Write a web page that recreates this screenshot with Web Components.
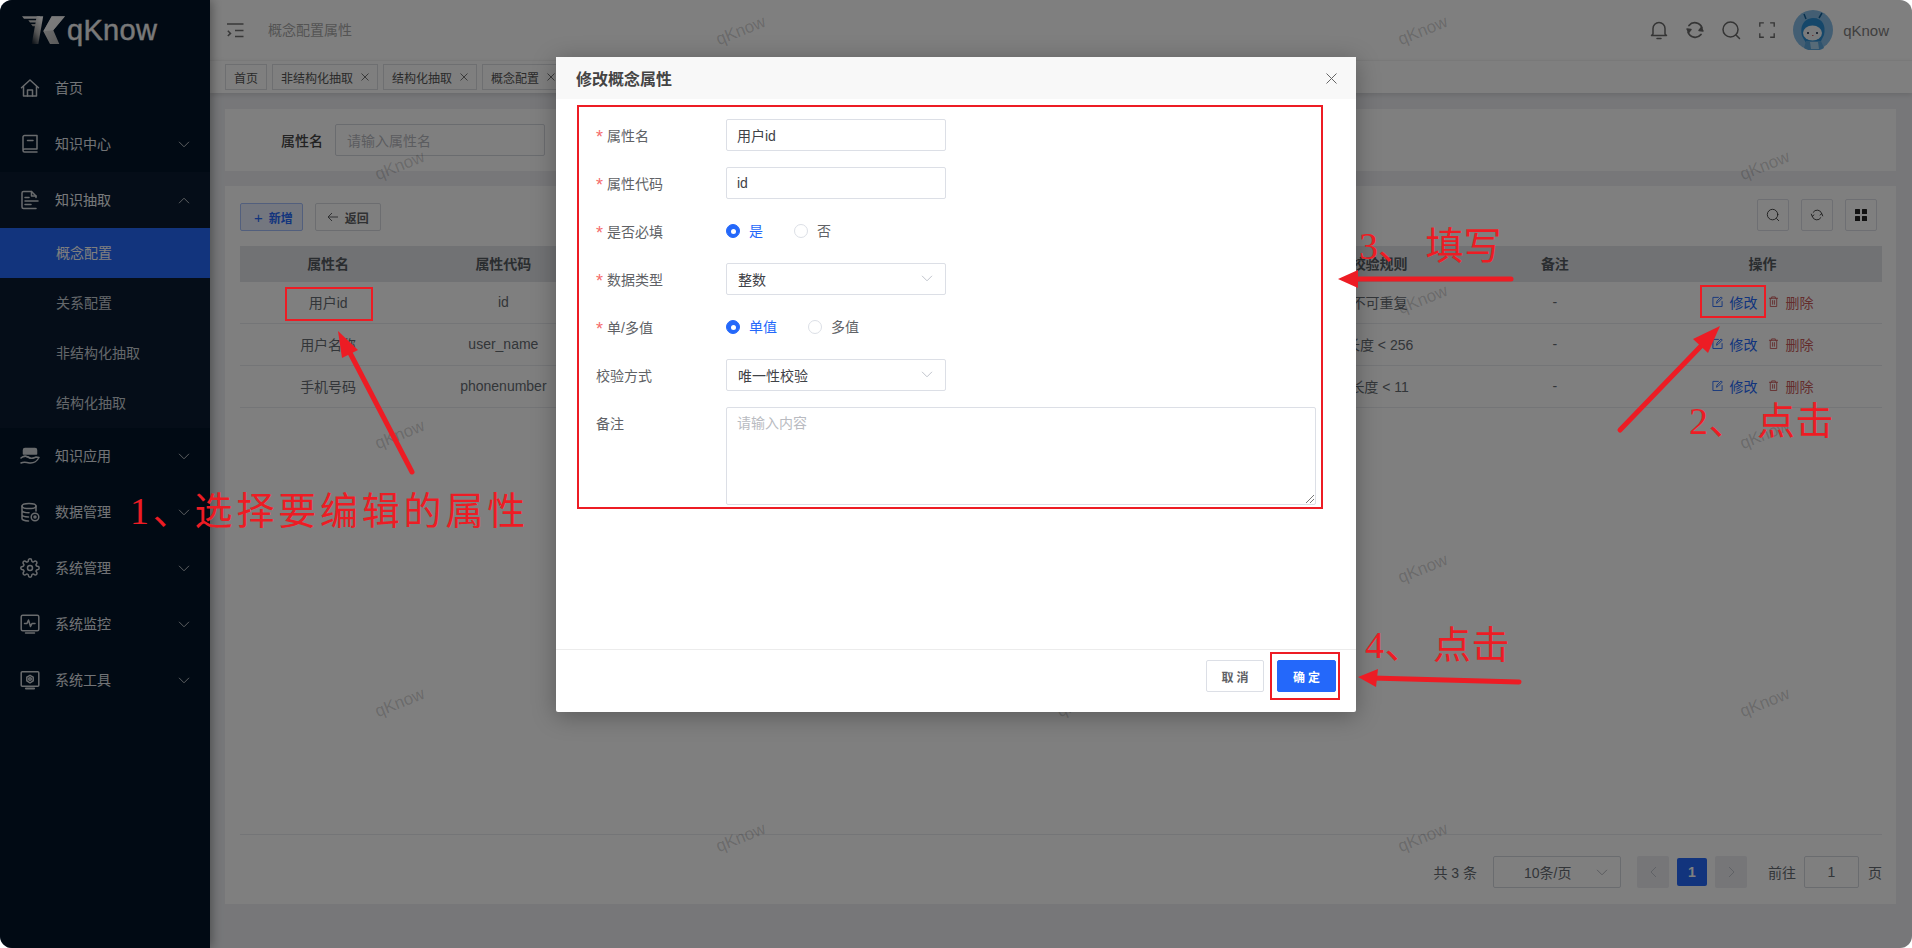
<!DOCTYPE html>
<html lang="zh"><head><meta charset="utf-8"><title>qKnow</title>
<style>
html,body{margin:0;padding:0;width:1912px;height:948px;overflow:hidden;background:#fff;font-family:"Liberation Sans","Noto Sans CJK SC",sans-serif;font-size:14px}
</style></head><body>
<x-app></x-app>
<script>
const FONT='"Liberation Sans","Noto Sans CJK SC",sans-serif';
const PRIMARY='#2468fa';
function def(name,css,html,init){
  customElements.define(name,class extends HTMLElement{
    connectedCallback(){
      if(this.shadowRoot)return;
      const r=this.attachShadow({mode:'open'});
      const h=typeof html==='function'?html(this):html;
      r.innerHTML='<style>'+css+'</style>'+h;
      if(init)init(r,this);
    }
  });
}
const chev=(d,c,w=12)=>`<svg width="${w}" height="${Math.round(w*.6)}" viewBox="0 0 12 7" fill="none" stroke="${c}" stroke-width="1"><path d="${d==='up'?'M1 6.2L6 1.2l5 5':'M1 .8l5 5 5-5'}"/></svg>`;
const ic=(inner,s=20,vb=20,sw=1.5)=>`<svg width="${s}" height="${s}" viewBox="0 0 ${vb} ${vb}" fill="none" stroke="currentColor" stroke-width="${sw}" stroke-linejoin="round" stroke-linecap="round">${inner}</svg>`;
const ICONS={
 home:ic('<path d="M1.500 9.800L10 2l8.500 7.800"/><path d="M3.500 8.500V18h13V8.500"/><path d="M7.500 18v-6h5v6"/>'),
 book:ic('<path d="M3 16.500V3a1.500 1.500 0 0 1 1.500-1.500H17V15H4.500A1.500 1.500 0 0 0 3 16.500 1.500 1.500 0 0 0 4.500 18H17"/><path d="M7.500 6.500h5.500"/>'),
 doc:ic('<path d="M16 7.500V6l-4.500-4.500h-8A1.500 1.500 0 0 0 2 3v14a1.500 1.500 0 0 0 1.500 1.500H16"/><path d="M11.500 1.500V6H16"/><path d="M5 7.500h4M5 11h13M5 14.500h6"/>'),
 hand:ic('<path d="M5 2.500h10a1.500 1.500 0 0 1 1.500 1.500v4h-13V4A1.500 1.500 0 0 1 5 2.500z" fill="currentColor"/><path d="M1 12c3-3 6-1.500 9 0 2.500 1 4.500-.5 6-1l3 .5c-2 3.500-5.500 6-9.500 5.500C6.500 16.200 4 15.500 1 17"/><path d="M4 10.500c2-.5 3.500 0 6 1.500"/>'),
 db:ic('<ellipse cx="9" cy="4" rx="7" ry="2.600"/><path d="M2 4v12.500c0 1.300 3 2.400 6.500 2.400M16 4v5M2 8.300c0 1.400 3 2.500 7 2.500M2 12.500c0 1.400 3 2.400 6.500 2.400"/><circle cx="15" cy="15" r="3.800"/><circle cx="15" cy="15" r="1"/>'),
 gear:ic('<path d="M12 15a3 3 0 1 0 0-6 3 3 0 0 0 0 6z"/><path d="M19.400 15a1.650 1.650 0 0 0 .33 1.820l.06.06a2 2 0 0 1 0 2.830 2 2 0 0 1-2.830 0l-.06-.06a1.650 1.650 0 0 0-1.820-.33 1.650 1.650 0 0 0-1 1.510V21a2 2 0 0 1-2 2 2 2 0 0 1-2-2v-.09A1.650 1.650 0 0 0 9 19.400a1.650 1.650 0 0 0-1.820.33l-.06.06a2 2 0 0 1-2.830 0 2 2 0 0 1 0-2.830l.06-.06a1.650 1.650 0 0 0 .33-1.820 1.650 1.650 0 0 0-1.510-1H3a2 2 0 0 1-2-2 2 2 0 0 1 2-2h.09A1.650 1.650 0 0 0 4.600 9a1.650 1.650 0 0 0-.33-1.820l-.06-.06a2 2 0 0 1 0-2.830 2 2 0 0 1 2.830 0l.06.06a1.650 1.650 0 0 0 1.820.33H9a1.650 1.650 0 0 0 1-1.510V3a2 2 0 0 1 2-2 2 2 0 0 1 2 2v.09a1.650 1.650 0 0 0 1 1.510 1.650 1.650 0 0 0 1.820-.33l.06-.06a2 2 0 0 1 2.830 0 2 2 0 0 1 0 2.830l-.06.06a1.650 1.650 0 0 0-.33 1.820V9a1.650 1.650 0 0 0 1.510 1H21a2 2 0 0 1 2 2 2 2 0 0 1-2 2h-.09a1.650 1.650 0 0 0-1.510 1z"/>',20,24,1.8),
 pulse:ic('<rect x="1.200" y="1.200" width="17.600" height="15.600" rx="1.500"/><path d="M5.500 19h9"/><path d="M4.500 9.500h2.500l1.500-3.500 2 6.500 1.500-3h3"/>'),
 tool:ic('<rect x="1.200" y="1.800" width="17.600" height="14.500" rx="1"/><path d="M6 18.500h8" stroke-width="2.200"/><circle cx="10" cy="9" r="1.300"/><path d="M10 5.300l3.200 1.900v3.700L10 12.800l-3.200-1.900V7.200z"/>')
};
def('x-nav-item',`:host{display:flex;align-items:center;height:56px;padding:0 20px;box-sizing:border-box;color:#e2e7ec;font-size:14px}
:host([open]){background:#0a1b30;color:#f0f3f6}
.i{width:20px;height:20px;margin-right:15px;color:#d3d7db;display:flex}.t{flex:1;padding-bottom:2px}`,
 h=>`<span class="i">${ICONS[h.getAttribute('icon')]}</span><span class="t"><slot></slot></span>${h.hasAttribute('chev')?chev(h.hasAttribute('open')?'up':'down','#b9bdc2'):''}`);
def('x-nav-sub',`:host{display:flex;align-items:center;height:50px;box-sizing:border-box;padding:0 0 2px 56px;color:#c9ced5;background:#0a1b30;font-size:14px}
:host([active]){background:${PRIMARY};color:#fff}`,'<slot></slot>');
def('x-logo',`:host{display:flex;align-items:center;height:60px;padding-left:22px;box-sizing:border-box}
span{font:500 29px/1 ${FONT};color:#f3f3f3;margin-left:2px;letter-spacing:.3px;-webkit-text-stroke:.4px #f3f3f3}`,
`<svg width="43" height="29" viewBox="0 0 43 29"><defs><linearGradient id="a" x1=".7" y1="0" x2=".1" y2="1"><stop offset="0" stop-color="#fff"/><stop offset=".55" stop-color="#aaa"/><stop offset="1" stop-color="#1a2430"/></linearGradient><linearGradient id="b" x1="0" y1="0" x2="1" y2="1"><stop offset="0" stop-color="#eee"/><stop offset="1" stop-color="#aaa"/></linearGradient></defs>
<path d="M0 .3h18l-.8 2.400H2z" fill="#e8e8e8"/><path d="M6.300 4.200h10.700l-.7 2.300H8z" fill="#ccc"/><path d="M9 8h6.800l-.6 2.300h-4.500z" fill="#aaa"/>
<path d="M14.700.3h6.500L16.300 28H9.700z" fill="url(#a)"/><path d="M29.700.3H43L31.300 14.300 37.300 28H28l-6.700-12.700z" fill="url(#b)"/><path d="M21.300 15.300L29.700.3H43L31.300 14.300z" fill="#fff" opacity=".75"/></svg><span>qKnow</span>`);
def('x-sidebar',`:host{display:block;position:relative;z-index:3;width:210px;flex:none;height:948px;background:#021428;box-shadow:2px 0 10px rgba(0,0,0,.35)}`,
`<x-logo></x-logo>
<x-nav-item icon="home">首页</x-nav-item>
<x-nav-item icon="book" chev>知识中心</x-nav-item>
<x-nav-item icon="doc" chev open>知识抽取</x-nav-item>
<x-nav-sub active>概念配置</x-nav-sub><x-nav-sub>关系配置</x-nav-sub><x-nav-sub>非结构化抽取</x-nav-sub><x-nav-sub>结构化抽取</x-nav-sub>
<x-nav-item icon="hand" chev>知识应用</x-nav-item>
<x-nav-item icon="db" chev>数据管理</x-nav-item>
<x-nav-item icon="gear" chev>系统管理</x-nav-item>
<x-nav-item icon="pulse" chev>系统监控</x-nav-item>
<x-nav-item icon="tool" chev>系统工具</x-nav-item>`);
def('x-header',`:host{display:flex;align-items:center;height:60px;flex:none;background:#fff;padding:0 23px 0 17px;box-sizing:border-box;color:#7d7d7d}
.ham{display:flex;margin-right:24px;color:#707070}.title{color:#a9a9a9;font-size:14px;flex:1;padding-bottom:2px}
.b{width:36px;display:flex;justify-content:center;color:#6a6a6a}
.name{margin-left:10px;font-size:15px;color:#7f7f7f}
.av{margin-left:8px;display:flex}`,
`<span class="ham"><svg width="17" height="15" viewBox="0 0 17 15" fill="none" stroke="currentColor" stroke-width="1.500"><path d="M0 1h16.500M8 7.500h8.500M8 13.500h8.500M.8 7.800l2.700 2.600-2.700 2.600"/></svg></span>
<span class="title">概念配置属性</span>
<span class="b">${ic('<path d="M10 2.500a6 6 0 0 0-6 6v5.500l-1.500 1.500h15L16 14V8.500a6 6 0 0 0-6-6z"/><path d="M8 18.500h4"/>')}</span>
<span class="b">${ic('<path d="M3 12a7.500 7.500 0 0 0 13 2.500M17 8A7.500 7.500 0 0 0 4 5.500" stroke-width="1.800"/><path d="M2 9l1.800 3.300L6 9.500z M18 11l-1.800-3.300L14 10.500z" fill="currentColor"/>')}</span>
<span class="b">${ic('<circle cx="9.500" cy="9.500" r="7.500"/><path d="M15 15l3.500 3.500"/>')}</span>
<span class="b">${ic('<path d="M2 6.500V2h4.500M13.500 2H18v4.500M2 13.500V18h4.500M13.500 18H18v-4.500" stroke-linecap="butt" stroke-linejoin="miter"/>',18)}</span>
<span class="av"><svg width="40" height="40" viewBox="0 0 40 40"><circle cx="20" cy="20" r="20" fill="#86bde6"/><path d="M9 26c-2-8 0-17 11-18 10 0 13 8 11 17l-4 8H13z" fill="#2a8fd4"/><path d="M13 9L11 4M26 8l3-5" stroke="#0f5f9a" stroke-width="1.500"/><ellipse cx="19.500" cy="23" rx="9.500" ry="7.500" fill="#f4f6f8"/><circle cx="15" cy="23" r="1" fill="#124"/><circle cx="24" cy="23" r="1" fill="#124"/><path d="M19 25.500h1.500" stroke="#c66" /><path d="M11 38l2-7h15l3 7a20 20 0 0 1-20 0z" fill="#5ca7dc"/><path d="M17 32h8l1 7h-8z" fill="#aed6f0"/></svg></span>
<span class="name">qKnow</span>`);
def('x-tag',`:host{display:inline-flex;align-items:center;height:26px;box-sizing:border-box;border:1px solid #dcdee2;padding:0 8px;color:#555;font-size:12px;background:#fff;gap:8px;flex:none}
svg{display:block}`,
 h=>`<slot></slot>${h.hasAttribute('closable')?'<svg width="8" height="8" viewBox="0 0 8 8" stroke="#777" stroke-width="1"><path d="M.5.5l7 7M7.500.5l-7 7"/></svg>':''}`);
def('x-tags',`:host{display:flex;align-items:center;gap:5px;height:33px;flex:none;padding:0 15px;box-sizing:border-box;background:#fff;border-top:1px solid #f3f3f3;box-shadow:0 2px 5px rgba(0,0,0,.12);position:relative;z-index:1}`,
`<x-tag>首页</x-tag><x-tag closable>非结构化抽取</x-tag><x-tag closable>结构化抽取</x-tag><x-tag closable>概念配置</x-tag>`);
def('x-search',`:host{display:flex;align-items:center;height:62px;flex:none;background:#fff;padding-left:56px;box-sizing:border-box}
.l{font-weight:500;color:#444;margin-right:12px;font-size:14px}
.i{width:210px;height:32px;box-sizing:border-box;border:1px solid #d5d8de;border-radius:2px;padding-left:11px;display:flex;align-items:center;color:#b7b9bf;font-size:14px;background:#fff}`,
`<span class="l">属性名</span><span class="i">请输入属性名</span>`);
def('x-btn',`:host{display:inline-flex;align-items:center;justify-content:center;height:28px;box-sizing:border-box;border:1px solid #d8dbe1;border-radius:2px;font-size:12px;font-weight:700;color:#606266;background:#fff;gap:6px;padding:0 11px}
:host([kind=plain]){background:#e8effe;border-color:#a4bffb;color:${PRIMARY};padding-right:9px}`,'<slot></slot>');
def('x-tool',`:host{display:flex;width:32px;height:32px;box-sizing:border-box;border:1px solid #dcdfe6;border-radius:2px;align-items:center;justify-content:center;color:#333;background:#fff}`,'<slot></slot>');
def('x-cell',`:host{display:flex;align-items:center;justify-content:center;font-size:14px;color:#666c73;min-width:0;box-sizing:border-box;padding:0 0 2px 1px}`,'<slot></slot>');
def('x-act',`:host{display:inline-flex;align-items:center;gap:7px;color:${PRIMARY};font-size:14px}:host([danger]){color:#c95b5b}
svg{display:block}`,h=>h.hasAttribute('danger')
 ?`${ic('<path d="M1.500 2.500h9M4 2.500V1h4v1.500M2.500 2.500V11.500h7V2.500M5 5v4M7 5v4"/>',11,12,1)}<slot></slot>`
 :`${ic('<path d="M7 1.500H1v10h10V6"/><path d="M5 7.500L5.500 5.500 10 1l1.200 1.200L6.700 6.800z"/>',11,12,1)}<slot></slot>`);
def('x-table',`:host{display:block;flex:1;min-height:0;border-bottom:1px solid #e8eaee}
.r{display:grid;grid-template-columns:repeat(8,1fr) 240px;height:42px;border-bottom:1px solid #e8eaee;box-sizing:border-box}
.h{height:36px;background:#e2e4e9;border:none}.h x-cell{font-weight:700;color:#555a60}
.a{gap:10px}`,
`<div class="r h"><x-cell>属性名</x-cell><x-cell>属性代码</x-cell><x-cell></x-cell><x-cell></x-cell><x-cell></x-cell><x-cell></x-cell><x-cell>校验规则</x-cell><x-cell>备注</x-cell><x-cell>操作</x-cell></div>`+
[['用户id','id','不可重复'],['用户名称','user_name','长度 &lt; 256'],['手机号码','phonenumber','长度 &lt; 11']].map(r=>`<div class="r"><x-cell>${r[0]}</x-cell><x-cell>${r[1]}</x-cell><x-cell></x-cell><x-cell></x-cell><x-cell></x-cell><x-cell></x-cell><x-cell>${r[2]}</x-cell><x-cell>-</x-cell><x-cell class="a"><x-act>修改</x-act><x-act danger>删除</x-act></x-cell></div>`).join(''));
def('x-pager',`:host{display:flex;align-items:center;justify-content:flex-end;height:69px;padding-top:5px;box-sizing:border-box;flex:none;font-size:14px;color:#666c73}
.s{width:128px;height:32px;box-sizing:border-box;border:1px solid #d5d8de;border-radius:2px;display:flex;align-items:center;margin:0 16px;padding:0 12px 0 30px;justify-content:space-between}
.p{width:32px;height:32px;background:#ecedf0;border-radius:2px;display:flex;align-items:center;justify-content:center}
.c{width:30px;height:28px;background:${PRIMARY};color:#fff;font-weight:700;border-radius:2px;display:flex;align-items:center;justify-content:center;margin:0 8px}
.j{margin:0 8px 0 21px}.i{width:55px;height:32px;box-sizing:border-box;border:1px solid #d5d8de;border-radius:2px;display:flex;align-items:center;justify-content:center}.pg{margin-left:9px}`,
`<span>共 3 条</span><span class="s">10条/页${chev('down','#b7b9bf')}</span><span class="p"><svg width="7" height="12" viewBox="0 0 7 12" fill="none" stroke="#c0c4cc"><path d="M6 1L1 6l5 5"/></svg></span><span class="c">1</span><span class="p"><svg width="7" height="12" viewBox="0 0 7 12" fill="none" stroke="#c0c4cc"><path d="M1 1l5 5-5 5"/></svg></span><span class="j">前往</span><span class="i">1</span><span class="pg">页</span>`);
def('x-card',`:host{display:flex;flex-direction:column;height:718px;flex:none;background:#fff;padding:13px 14px 0 15px;box-sizing:border-box}
.t{display:flex;justify-content:space-between;align-items:flex-end;height:32px;margin-bottom:15px;padding-right:5px}
.l,.rr{display:flex}.l{gap:12px}.rr{gap:12px}`,
`<div class="t"><div class="l"><x-btn kind="plain"><span style="font-weight:400;font-size:15px;margin-left:2px">+</span><span>新增</span></x-btn><x-btn><svg width="12" height="10" viewBox="0 0 12 10" fill="none" stroke="#606266"><path d="M11 5H1.500M5 1L1 5l4 4"/></svg><span>返回</span></x-btn></div>
<div class="rr"><x-tool>${ic('<circle cx="7.500" cy="7.500" r="6"/><path d="M12 12l2.500 2.500"/>',14,16,1)}</x-tool><x-tool>${ic('<path d="M2.500 9.500a5.500 5.500 0 0 0 10 1.500M13.500 6.500a5.500 5.500 0 0 0-10-1.500"/><path d="M1.500 7l1 2.500 2-1.500M14.500 9l-1-2.500-2 1.500"/>',14,16,1)}</x-tool><x-tool><svg width="12" height="12" viewBox="0 0 12 12" fill="#222"><rect width="5" height="5" rx=".5"/><rect x="7" width="5" height="5" rx=".5"/><rect y="7" width="5" height="5" rx=".5"/><rect x="7" y="7" width="5" height="5" rx=".5"/></svg></x-tool></div></div>
<x-table></x-table><x-pager></x-pager>`);
def('x-watermark',`:host{position:absolute;inset:0;pointer-events:none;z-index:2;display:block}
span{position:absolute;transform:translate(-50%,-50%) rotate(-22deg);font:17px "Liberation Sans",sans-serif;color:rgba(0,0,0,.18)}`,
 ()=>{let o='';const x=[400,741,1082,1423,1765];x.forEach((v,i)=>{const ys=i%2?[31,300,569,838]:[166,435,703];ys.forEach(y=>o+=`<span style="left:${v}px;top:${y}px">qKnow</span>`)});return o});
def('x-field',`:host{display:grid;grid-template-columns:130px 1fr;margin-bottom:16px;font-size:14px;color:#606266}
.l{display:flex;align-items:center;height:32px}.s{color:#f56c6c;width:11px;flex:none;font-size:18px;line-height:18px;height:14px}.x{padding-bottom:1px}`,
 h=>`<div class="l">${h.hasAttribute('req')?'<span class="s">*</span>':''}<span class="x">${h.getAttribute('label')}</span></div><div><slot></slot></div>`);
def('x-input',`:host{display:flex;align-items:center;justify-content:space-between;box-sizing:border-box;width:220px;height:32px;border:1px solid #dcdfe6;border-radius:2px;padding:0 12px 1px 10px;font-size:14px;color:#3f4247;background:#fff}:host([sel]){padding-left:11px}`,
 h=>`<slot></slot>${h.hasAttribute('sel')?chev('down','#c0c4cc'):''}`);
def('x-area',`:host{display:flex;flex-direction:column;justify-content:space-between;box-sizing:border-box;width:590px;height:98px;border:1px solid #dcdfe6;border-radius:2px;padding:4px 1px 1px 10px;font-size:14px;line-height:22px;color:#b9bbc1}
svg{align-self:flex-end;display:block}`,
`<slot></slot><svg width="8" height="8" viewBox="0 0 8 8" stroke="#777" stroke-width="1"><path d="M0 8L8 0M4 8l4-4"/></svg>`);
def('x-radio',`:host{display:inline-flex;align-items:center;gap:9px;font-size:14px;color:#606266;margin-right:31px}
:host([on]){color:${PRIMARY}}
i{width:14px;height:14px;box-sizing:border-box;border:1px solid #dcdfe6;border-radius:50%;display:flex;align-items:center;justify-content:center;background:#fff}
:host([on]) i{background:${PRIMARY};border-color:${PRIMARY}}
:host([on]) i::after{content:"";width:5px;height:5px;border-radius:50%;background:#fff}
span{padding-bottom:2px}`,'<i></i><span><slot></slot></span>');
def('x-radios',`:host{display:flex;align-items:center;height:32px}`,'<slot></slot>');
def('x-dlg-btn',`:host{display:inline-flex;align-items:center;justify-content:center;width:58px;height:32px;box-sizing:border-box;border:1px solid #dcdfe6;border-radius:2px;font-size:12px;font-weight:700;letter-spacing:3px;color:#606266;background:#fff;padding-left:3px}
:host([primary]){background:${PRIMARY};border-color:${PRIMARY};color:#fff;width:59px}`,'<slot></slot>');
def('x-dialog',`:host{position:absolute;left:556px;top:57px;width:800px;height:655px;background:#fff;border-radius:2px;box-shadow:0 4px 24px rgba(0,0,0,.3);display:flex;flex-direction:column;z-index:5}
.h{height:42px;background:#f8f8f8;display:flex;align-items:center;justify-content:space-between;padding:0 19px 0 20px;font-size:16px;font-weight:700;color:#444;flex:none}
.b{flex:1;padding:20px 40px 0}.b x-field:last-child{margin-bottom:0}
.f{height:63px;box-sizing:border-box;border-top:1px solid #ececec;display:flex;justify-content:flex-end;gap:13px;padding:10px 20px 0;flex:none}`,
`<div class="h"><span>修改概念属性</span><svg width="11" height="11" viewBox="0 0 11 11" stroke="#666" stroke-width="1"><path d="M.5.5l10 10M10.500.5l-10 10"/></svg></div>
<div class="b">
<x-field req label="属性名"><x-input>用户id</x-input></x-field>
<x-field req label="属性代码"><x-input>id</x-input></x-field>
<x-field req label="是否必填"><x-radios><x-radio on>是</x-radio><x-radio>否</x-radio></x-radios></x-field>
<x-field req label="数据类型"><x-input sel>整数</x-input></x-field>
<x-field req label="单/多值"><x-radios><x-radio on>单值</x-radio><x-radio>多值</x-radio></x-radios></x-field>
<x-field label="校验方式"><x-input sel>唯一性校验</x-input></x-field>
<x-field label="备注"><x-area>请输入内容</x-area></x-field>
</div>
<div class="f"><x-dlg-btn>取消</x-dlg-btn><x-dlg-btn primary>确定</x-dlg-btn></div>`);
def('x-mark',`:host{position:absolute;box-sizing:border-box;border:2px solid #ed1c24;display:block;pointer-events:none}`,'');
def('x-note',`:host{position:absolute;font-family:"Liberation Serif","Noto Sans CJK SC",serif;font-weight:400;font-size:38px;line-height:1;color:#ed1c24;white-space:pre;display:block}`,'<slot></slot>');
def('x-notes',`:host{position:absolute;inset:0;z-index:8;display:block;pointer-events:none}svg{position:absolute;left:0;top:0}`,
`<svg width="1912" height="948" fill="#ed1c24" stroke="none">
<g stroke="#ed1c24" stroke-width="5" stroke-linecap="round" fill="none"><path d="M412 472L349 351"/><path d="M1620 430L1702 345"/><path d="M1511 279H1352"/><path d="M1519 682L1372 678"/></g>
<path d="M338 331L358 350L342 358z"/><path d="M1720 326L1708 353L1693 339z"/><path d="M1338 279L1358 270V288z"/><path d="M1358 677L1378 669L1376 687z"/>
</svg>
<x-mark style="left:285px;top:287px;width:88px;height:34px"></x-mark>
<x-mark style="left:1700px;top:285px;width:66px;height:33px"></x-mark>
<x-mark style="left:577px;top:105px;width:746px;height:404px"></x-mark>
<x-mark style="left:1270px;top:652px;width:70px;height:48px"></x-mark>
<x-note style="left:130px;top:492px;letter-spacing:3.800px">1、选择要编辑的属性</x-note>
<x-note style="left:1689px;top:402px;letter-spacing:.5px">2、 点击</x-note>
<x-note style="left:1359px;top:227px;letter-spacing:0">3、 填写</x-note>
<x-note style="left:1365px;top:626px;letter-spacing:.5px">4、 点击</x-note>`);
def('x-app',`:host{display:flex;position:relative;width:1912px;height:948px;overflow:hidden;border-radius:12px;background:#eeeff3;font-family:${FONT}}
.m{flex:1;display:flex;flex-direction:column;min-width:0;position:relative}
.c{flex:1;display:flex;flex-direction:column;gap:15px;padding:16px 16px 0 15px}
.o{position:absolute;inset:0;background:rgba(0,0,0,.5);z-index:4}`,
`<x-sidebar></x-sidebar><div class="m"><x-header></x-header><x-tags></x-tags><div class="c"><x-search></x-search><x-card></x-card></div></div><x-watermark></x-watermark><div class="o"></div><x-dialog></x-dialog><x-notes></x-notes>`);
</script>
</body></html>
